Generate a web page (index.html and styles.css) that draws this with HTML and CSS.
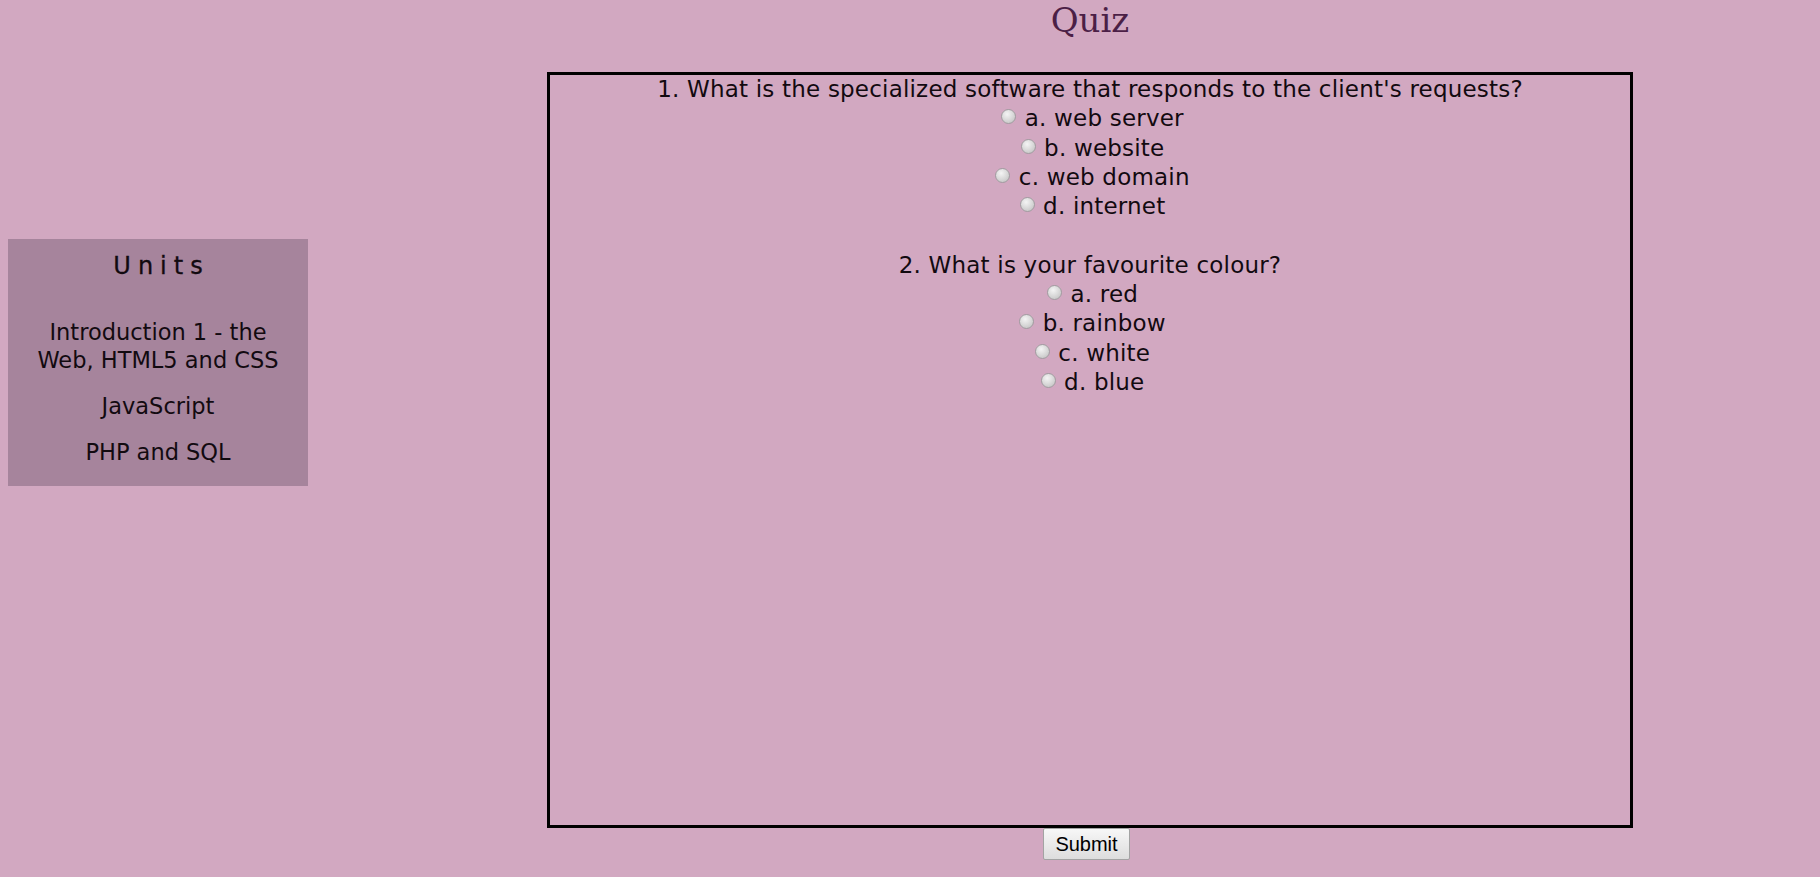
FILE: index.html
```html
<!DOCTYPE html>
<html lang="en">
<head>
<meta charset="utf-8">
<title>Quiz</title>
<link rel="stylesheet" href="styles.css">
</head>
<body>
<div class="page">
  <nav class="sidebar">
    <h2 class="units-title">Units</h2>
    <ul class="units-list">
      <li>Introduction 1 - the Web, HTML5 and CSS</li>
      <li>JavaScript</li>
      <li>PHP and SQL</li>
    </ul>
  </nav>
  <main class="main">
    <h1 class="title">Quiz</h1>
    <form class="quiz-form">
      <div class="quiz-box">
        <div class="question">
          <div class="q-text">1. What is the specialized software that responds to the client's requests?</div>
          <div class="option"><input type="radio" name="q1" id="q1a"> <label for="q1a">a. web server</label></div>
          <div class="option"><input type="radio" name="q1" id="q1b"> <label for="q1b">b. website</label></div>
          <div class="option"><input type="radio" name="q1" id="q1c"> <label for="q1c">c. web domain</label></div>
          <div class="option"><input type="radio" name="q1" id="q1d"> <label for="q1d">d. internet</label></div>
        </div>
        <div class="question">
          <div class="q-text">2. What is your favourite colour?</div>
          <div class="option"><input type="radio" name="q2" id="q2a"> <label for="q2a">a. red</label></div>
          <div class="option"><input type="radio" name="q2" id="q2b"> <label for="q2b">b. rainbow</label></div>
          <div class="option"><input type="radio" name="q2" id="q2c"> <label for="q2c">c. white</label></div>
          <div class="option"><input type="radio" name="q2" id="q2d"> <label for="q2d">d. blue</label></div>
        </div>
      </div>
      <div class="submit-row"><button type="button" class="submit-btn">Submit</button></div>
    </form>
  </main>
</div>
</body>
</html>
```

FILE: styles.css
```css
html, body {
  margin: 0;
  padding: 0;
}
body {
  background: #d2a8c1;
  font-family: "DejaVu Sans", "Inter", sans-serif;
  color: #120a10;
}
.page {
  display: flex;
  align-items: flex-start;
  padding: 0 8px;
  gap: 60px;
}
.sidebar {
  width: 300px;
  flex: 0 0 300px;
  margin-top: 239px;
  background: #a6849c;
  box-sizing: border-box;
  padding: 12px 16px 20px;
  text-align: center;
}
.units-title {
  margin: 0 0 37px;
  font-size: 24px;
  font-weight: normal;
  line-height: 30px;
  letter-spacing: 7px;
  padding-left: 7px;
  -webkit-text-stroke: 0.3px currentColor;
}
.units-list {
  list-style: none;
  margin: 0;
  padding: 0;
  display: flex;
  flex-direction: column;
  gap: 18px;
  font-size: 22.5px;
  line-height: 28px;
}
.main {
  flex: 1;
  text-align: center;
}
.title {
  margin: 0 0 32px;
  font-family: "DejaVu Serif", serif;
  font-weight: normal;
  font-size: 34px;
  line-height: normal;
  color: #4b1f46;
}
.quiz-box {
  width: 75.2%;
  height: 756px;
  margin: 0 auto;
  border: 3px solid #000;
  box-sizing: border-box;
  font-size: 23px;
  letter-spacing: 0.2px;
  line-height: 29.3px;
}
.question + .question {
  margin-top: 29.3px;
}
.option input[type="radio"] {
  -webkit-appearance: none;
  appearance: none;
  width: 15px;
  height: 15px;
  margin: 0 1px 2px 5px;
  border: 1px solid #a19ca0;
  border-radius: 50%;
  box-sizing: border-box;
  background: radial-gradient(circle at 40% 32%, #f4f4f4 0%, #d9d9d9 50%, #bdbdbd 100%);
  vertical-align: baseline;
}
.submit-row {
  text-align: center;
  padding-right: 7px;
}
.submit-btn {
  font-family: "Liberation Sans", Arial, sans-serif;
  font-size: 20px;
  line-height: 23px;
  padding: 4px 11px 3px;
  border: 1px solid #a3a3a3;
  border-radius: 2px;
  background: linear-gradient(#f7f7f7, #dddddd);
  color: #000;
}
```
